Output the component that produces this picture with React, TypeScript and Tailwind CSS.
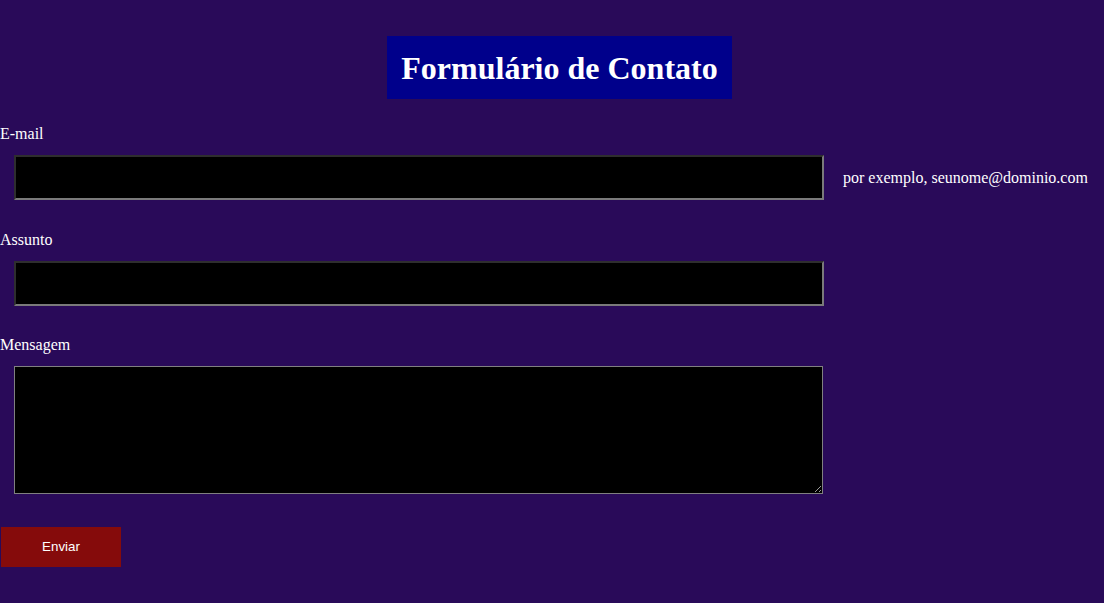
export default function App() {
  return (
    <div className="min-h-[603px] w-full bg-[#290a59] text-white font-['Liberation_Serif','Times_New_Roman',serif]">
      <form className="flex flex-col pt-[36px]" onSubmit={(e) => e.preventDefault()}>
        {/* Title */}
        <div className="flex justify-center pl-[15px]">
          <h1 className="flex h-[63px] items-center bg-[#00008b] px-[14px] text-[32px] font-bold leading-none">
            Formulário de Contato
          </h1>
        </div>

        {/* E-mail */}
        <label className="mt-[26px] h-[18px] text-[16px] leading-[18px]">E-mail</label>
        <div className="mt-[12px] flex items-center">
          <input
            type="email"
            className="ml-[14px] h-[45px] w-[810px] border-2 border-t-[#2e2e2e] border-l-[#2e2e2e] border-b-[#7a7a7a] border-r-[#7a7a7a] bg-black px-2 text-white outline-none"
          />
          <span className="ml-[19px] text-[16px]">por exemplo, seunome@dominio.com</span>
        </div>

        {/* Assunto */}
        <label className="mt-[31px] h-[18px] text-[16px] leading-[18px]">Assunto</label>
        <div className="mt-[12px] flex">
          <input
            type="text"
            className="ml-[14px] h-[45px] w-[810px] border-2 border-t-[#2e2e2e] border-l-[#2e2e2e] border-b-[#7a7a7a] border-r-[#7a7a7a] bg-black px-2 text-white outline-none"
          />
        </div>

        {/* Mensagem */}
        <label className="mt-[30px] h-[18px] text-[16px] leading-[18px]">Mensagem</label>
        <div className="mt-[12px] flex">
          <textarea className="ml-[14px] h-[128px] w-[809px] border border-[#808080] bg-black p-1 text-white outline-none" />
        </div>

        <div className="mt-[33px] flex">
          <button
            type="submit"
            className="ml-px h-[40px] w-[120px] bg-[#850b0b] font-['Liberation_Sans',Arial,sans-serif] text-[13.33px] text-white"
          >
            Enviar
          </button>
        </div>
      </form>
    </div>
  );
}
